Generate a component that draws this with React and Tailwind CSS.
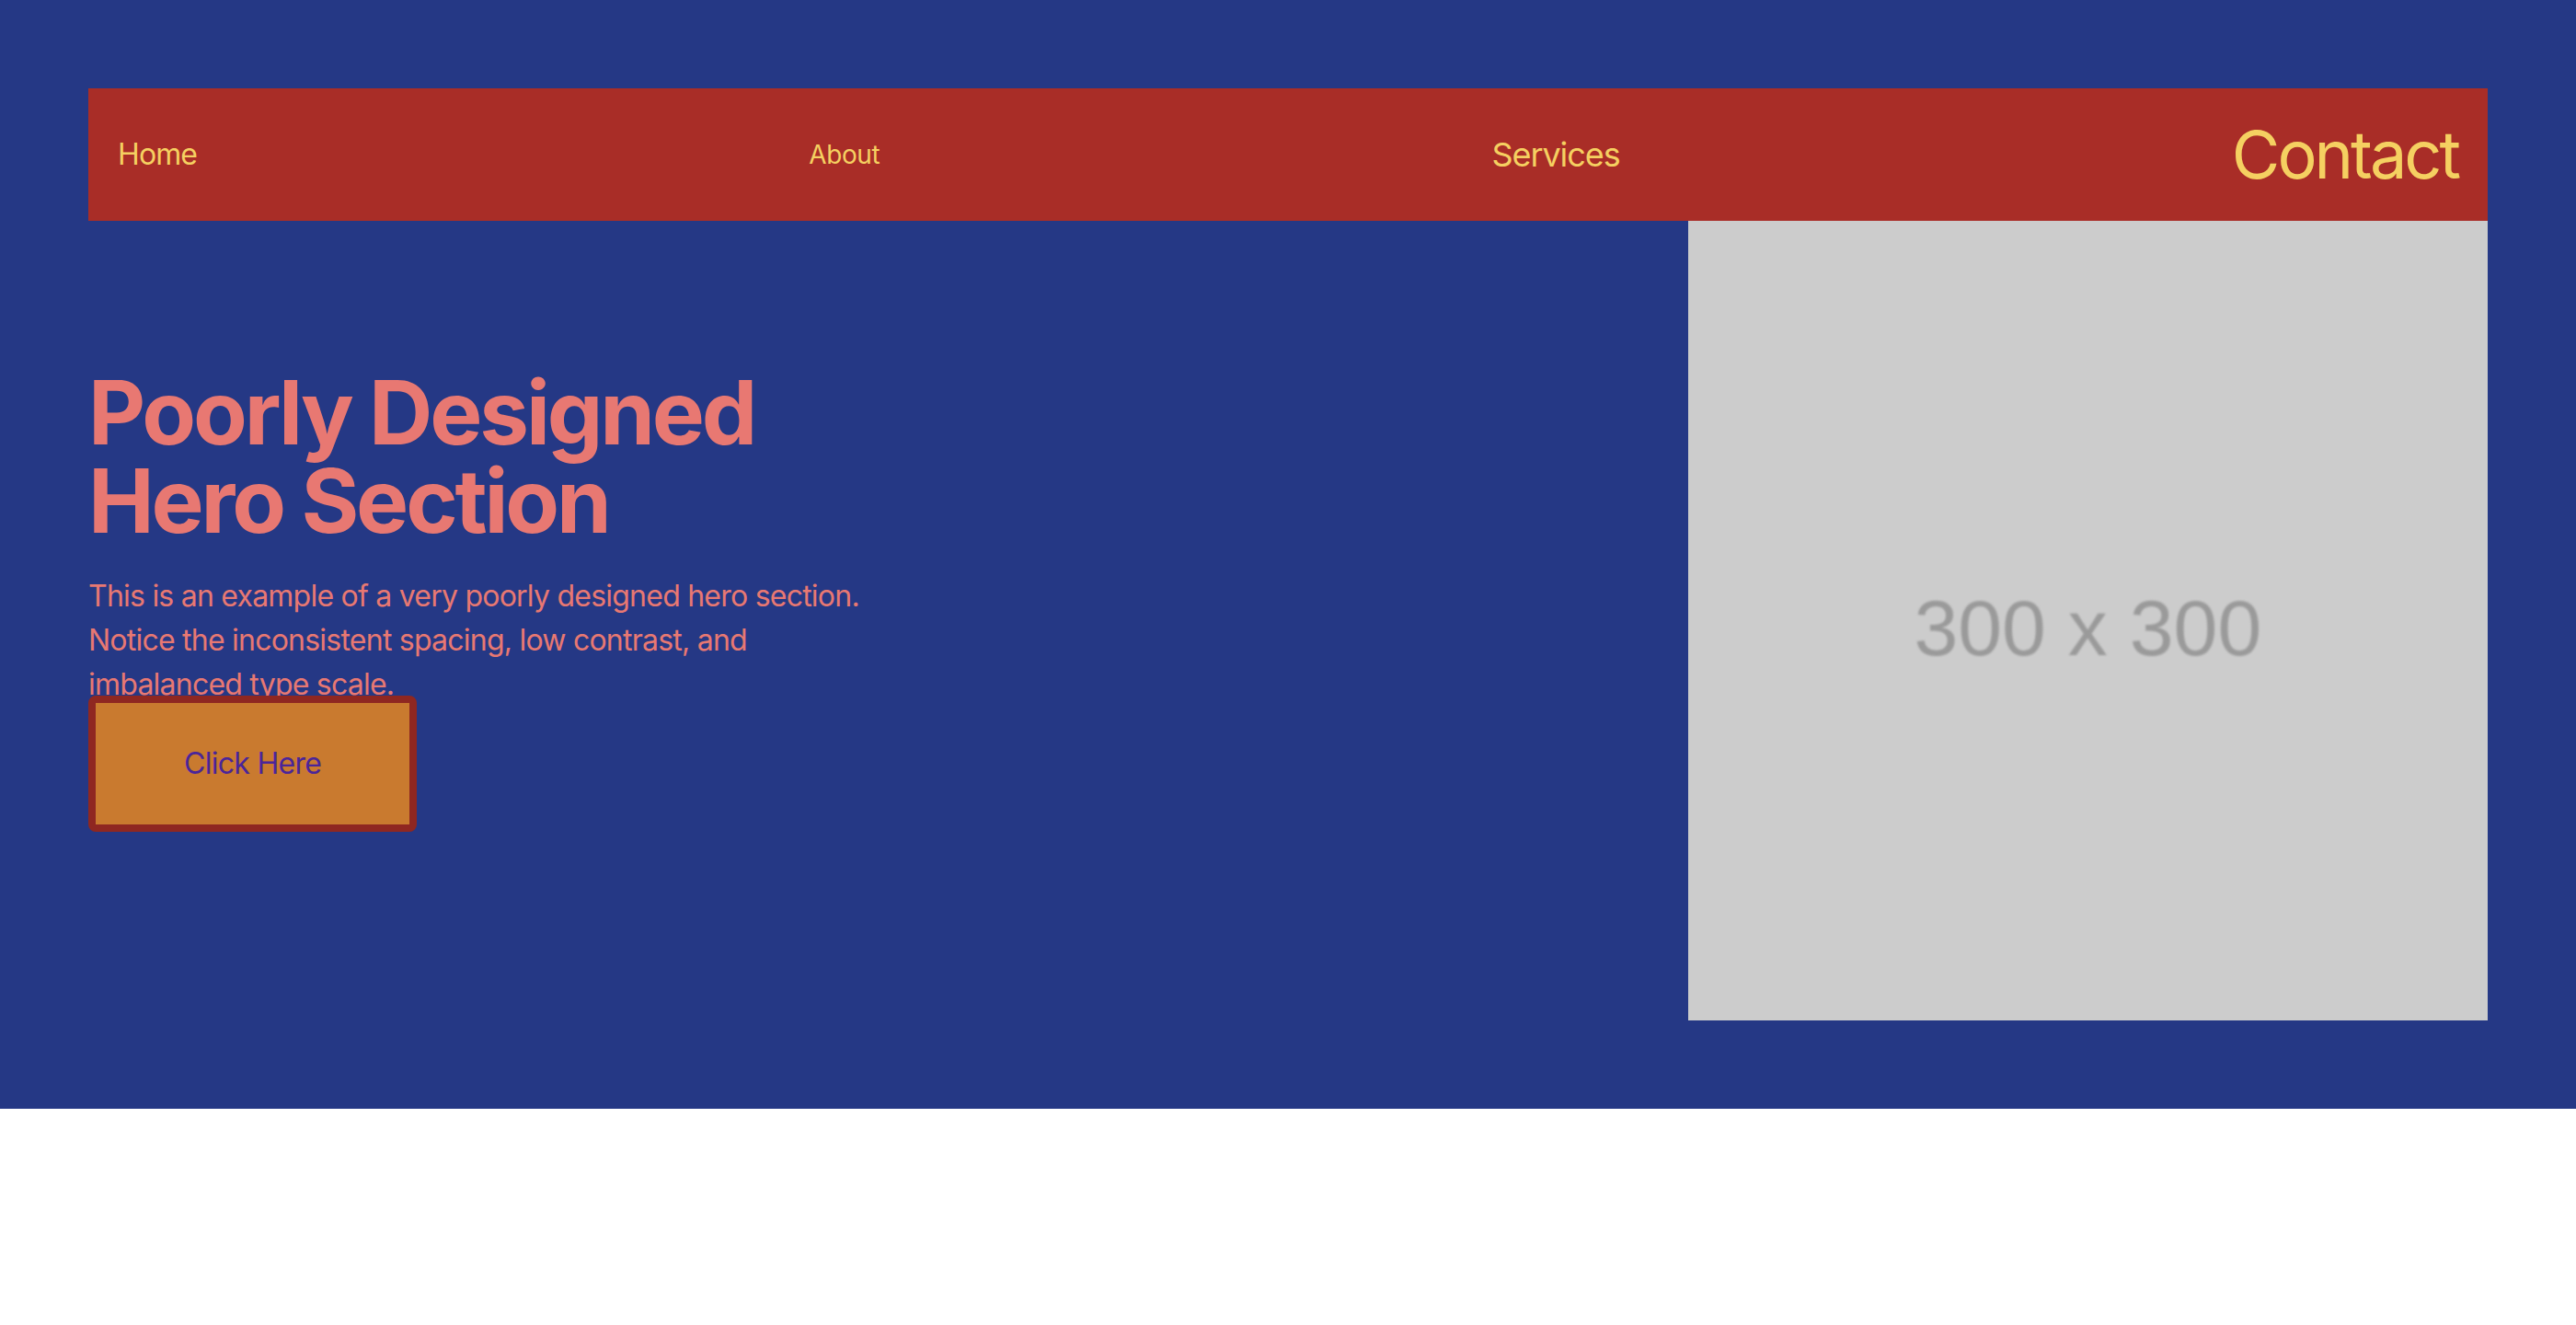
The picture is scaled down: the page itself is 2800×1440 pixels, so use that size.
export default function App() {
  return (
    <div className="min-h-screen bg-white font-['Inter',sans-serif]">
      <section className="bg-[#253885] p-24">
        <nav className="flex items-center justify-between bg-[#a92d27] px-8 py-8 text-[#f5d061]">
          <a href="#" className="text-[32px] leading-[48px] tracking-[-0.028em]">
            Home
          </a>
          <a href="#" className="text-[28px] leading-[40px] tracking-[-0.015em]">
            About
          </a>
          <a href="#" className="text-[36px] leading-[56px] tracking-[-0.03em]">
            Services
          </a>
          <a href="#" className="text-[72px] leading-[80px] tracking-[-0.042em]">
            Contact
          </a>
        </nav>

        <div className="flex items-start justify-between">
          <div className="max-w-[896px] pt-[160px]">
            <h1 className="text-[96px] leading-none font-bold tracking-[-0.033em] text-[#e87872]">
              Poorly Designed Hero Section
            </h1>
            <p className="mt-8 h-[132px] max-w-[860px] text-[32px] leading-[48px] tracking-[-0.024em] text-[#e87872]">
              This is an example of a very poorly designed hero section. Notice
              the inconsistent spacing, low contrast, and imbalanced type scale.
            </p>
            <button className="rounded-[8px] border-8 border-[#8f2721] bg-[#c97a2f] px-24 py-[42px] text-[32px] leading-[48px] tracking-[-0.022em] text-[#4a2599]">
              Click Here
            </button>
          </div>

          <div className="flex aspect-square w-1/3 items-center justify-center bg-[#cccccc]">
            <span className="pt-4 font-['Liberation_Sans',sans-serif] text-[86px] text-[#9a9a9a] blur-[1px]">
              300 x 300
            </span>
          </div>
        </div>
      </section>
    </div>
  );
}
